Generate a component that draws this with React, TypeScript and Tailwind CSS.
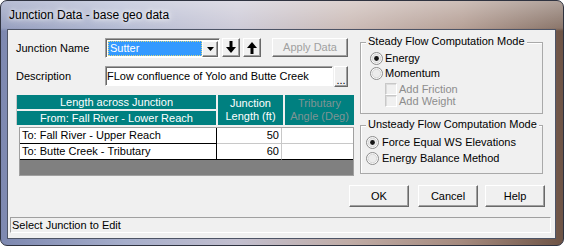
const raised =
  "border border-t-white border-l-white border-r-[#696969] border-b-[#696969] shadow-[inset_-1px_-1px_0_#a0a0a0] bg-[#f0f0f0]";
const sunken =
  "border border-t-[#a0a0a0] border-l-[#a0a0a0] border-r-white border-b-white shadow-[inset_1px_1px_0_#696969]";

function Radio({ checked }: { checked?: boolean }) {
  return (
    <svg width="13" height="13" viewBox="0 0 13 13" className="shrink-0">
      <circle cx="6.5" cy="6.5" r="6" fill="#fdfdfd" stroke="#8b8b8b" />
      <circle cx="6.5" cy="6.5" r="4.3" fill="#ececec" stroke="#d6d6d6" />
      {checked && <circle cx="6.5" cy="6.5" r="2.4" fill="#151515" />}
    </svg>
  );
}

function Check() {
  return (
    <div className="h-[12px] w-[12px] shrink-0 border border-t-[#c8c8c8] border-l-[#c8c8c8] border-r-white border-b-white bg-[#f0f0f0] shadow-[inset_1px_1px_0_#dcdcdc]" />
  );
}

function Arrow({ up }: { up?: boolean }) {
  return (
    <svg width="10" height="13" viewBox="0 0 10 13" className={up ? "rotate-180" : ""}>
      <rect x="3.5" y="0" width="3" height="7" fill="#000" />
      <path d="M0 6 L10 6 L5 12 Z" fill="#000" />
    </svg>
  );
}

function Group({
  title,
  className,
  children,
}: {
  title: string;
  className: string;
  children: React.ReactNode;
}) {
  return (
    <div className={`relative border border-[#a9a9a9] shadow-[inset_1px_1px_0_#fff] ${className}`}>
      <span className="absolute -top-[8px] left-[5px] bg-[#f0f0f0] px-[2px] leading-[13px]">
        {title}
      </span>
      {children}
    </div>
  );
}

export default function App() {
  return (
    <div className="h-[246px] w-[564px] bg-white font-['Liberation_Sans',Arial,sans-serif] text-[11px] text-black">
      <div className="flex h-full flex-col rounded-[7px] border border-[#2f3340] bg-[linear-gradient(180deg,rgba(255,255,255,0.45)_0px,rgba(255,255,255,0.2)_27px,rgba(255,255,255,0)_30px),linear-gradient(90deg,#7d88b0_0%,#a6aecb_22%,#c2bfcf_42%,#c0aca6_62%,#a58a7e_82%,#6e5446_100%)] pr-[7px] pb-[6px] pl-[6px]">
        <div className="flex h-[28px] items-center pl-[2px] text-[12px] [text-shadow:0_0_8px_#fff,0_0_4px_#fff]">
          Junction Data - base geo data
        </div>
        <div className="flex flex-1 flex-col border border-[#4d5466] bg-[#f0f0f0]">
          <div className="flex pt-[8px] pl-[8px]">
            {/* left column */}
            <div className="w-[338px]">
              <div className="flex h-[20px] items-start">
                <span className="w-[89px] self-center">Junction Name</span>
                <div className={`flex h-[20px] w-[115px] bg-white p-[1px] pl-[2px] pt-[2px] ${sunken}`}>
                  <div className="flex h-[15px] flex-1 items-center border border-dotted border-[#d8d880] bg-[#3399ff] pl-[1px] text-white">
                    Sutter
                  </div>
                  <div className={`flex h-[16px] w-[16px] items-center justify-center ${raised}`}>
                    <svg width="7" height="4" viewBox="0 0 7 4">
                      <path d="M0 0 L7 0 L3.5 4 Z" fill="#000" />
                    </svg>
                  </div>
                </div>
                <div className={`ml-[2px] flex h-[19px] w-[18px] items-center justify-center ${raised}`}>
                  <Arrow />
                </div>
                <div className={`ml-[3px] flex h-[19px] w-[18px] items-center justify-center ${raised}`}>
                  <Arrow up />
                </div>
                <div className={`ml-[11px] flex h-[19px] w-[76px] items-center justify-center text-[#a0a0a0] ${raised}`}>
                  Apply Data
                </div>
              </div>

              <div className="mt-[8px] flex h-[21px] items-start">
                <span className="w-[89px] self-center">Description</span>
                <div className={`flex h-[20px] w-[228px] items-center bg-white pl-[1px] ${sunken}`}>
                  FLow confluence of Yolo and Butte Creek
                </div>
                <div className={`ml-[1px] flex h-[21px] w-[14px] items-end justify-center pb-[2px] leading-[8px] ${raised}`}>
                  ...
                </div>
              </div>

              {/* grid */}
              <div className="mt-[8px] h-[81px] w-[338px]">
                <div className="flex h-[30px] border-l border-[#c8c8c8] text-white">
                  <div className="flex w-[199px] flex-col gap-[2px]">
                    <div className="h-[14px] bg-[#008080] text-center leading-[14px]">
                      Length across Junction
                    </div>
                    <div className="h-[14px] bg-[#008080] text-center leading-[14px]">
                      From: Fall River - Lower Reach
                    </div>
                  </div>
                  <div className="ml-[2px] flex w-[65px] flex-col justify-center bg-[#008080] text-center leading-[13px]">
                    <span>Junction</span>
                    <span>Length (ft)</span>
                  </div>
                  <div className="ml-[2px] flex w-[69px] flex-col justify-center bg-[#008080] text-center leading-[13px] text-[#7f9494]">
                    <span>Tributary</span>
                    <span>Angle (Deg)</span>
                  </div>
                </div>
                <div className="mt-[2px] ml-[3px] h-[49px] w-[335px] border border-[#a0a0a0] bg-[#808080]">
                  <div className="flex h-[16px] bg-white leading-[15px]">
                    <div className="w-[197px] border-r border-b border-black pl-[2px]">To: Fall River - Upper Reach</div>
                    <div className="w-[65px] border-r border-b border-[#c8c8c8] pr-[2px] text-right">50</div>
                    <div className="flex-1 border-b border-[#c8c8c8]" />
                  </div>
                  <div className="flex h-[16px] bg-white leading-[15px]">
                    <div className="w-[197px] border-r border-b border-black pl-[2px]">To: Butte Creek - Tributary</div>
                    <div className="w-[65px] border-r border-b border-r-[#c8c8c8] border-b-black pr-[2px] text-right">60</div>
                    <div className="flex-1 border-b border-black" />
                  </div>
                </div>
              </div>
            </div>

            {/* right column */}
            <div className="mt-[4px] ml-[6px] w-[183px]">
              <Group title="Steady Flow Computation Mode" className="h-[72px] pt-[8px] pl-[9px]">
                <div className="flex h-[15px] items-center gap-[2px]">
                  <Radio checked />
                  <span>Energy</span>
                </div>
                <div className="flex h-[15px] items-center gap-[2px]">
                  <Radio />
                  <span>Momentum</span>
                </div>
                <div className="mt-[2px] flex h-[12px] items-center gap-[2px] pl-[15px] text-[#8d8d8d]">
                  <Check />
                  <span>Add Friction</span>
                </div>
                <div className="flex h-[12px] items-center gap-[2px] pl-[15px] text-[#8d8d8d]">
                  <Check />
                  <span>Add Weight</span>
                </div>
              </Group>
              <Group title="Unsteady Flow Computation Mode" className="mt-[11px] h-[49px] pt-[9px] pl-[5px]">
                <div className="flex h-[15px] items-center gap-[3px]">
                  <Radio checked />
                  <span>Force Equal WS Elevations</span>
                </div>
                <div className="mt-[1px] flex h-[15px] items-center gap-[3px]">
                  <Radio />
                  <span>Energy Balance Method</span>
                </div>
              </Group>
            </div>
          </div>

          {/* buttons */}
          <div className="mt-[9px] flex justify-end pr-[10px]">
            <div className={`flex h-[22px] w-[60px] items-center justify-center ${raised}`}>OK</div>
            <div className={`ml-[9px] flex h-[22px] w-[60px] items-center justify-center ${raised}`}>Cancel</div>
            <div className={`ml-[7px] flex h-[22px] w-[60px] items-center justify-center ${raised}`}>Help</div>
          </div>

          {/* status bar */}
          <div className="mt-[10px] mr-[4px] ml-[2px] flex h-[16px] items-center border border-t-[#a0a0a0] border-l-[#a0a0a0] border-r-white border-b-white pl-[1px]">
            Select Junction to Edit
          </div>
        </div>
      </div>
    </div>
  );
}
